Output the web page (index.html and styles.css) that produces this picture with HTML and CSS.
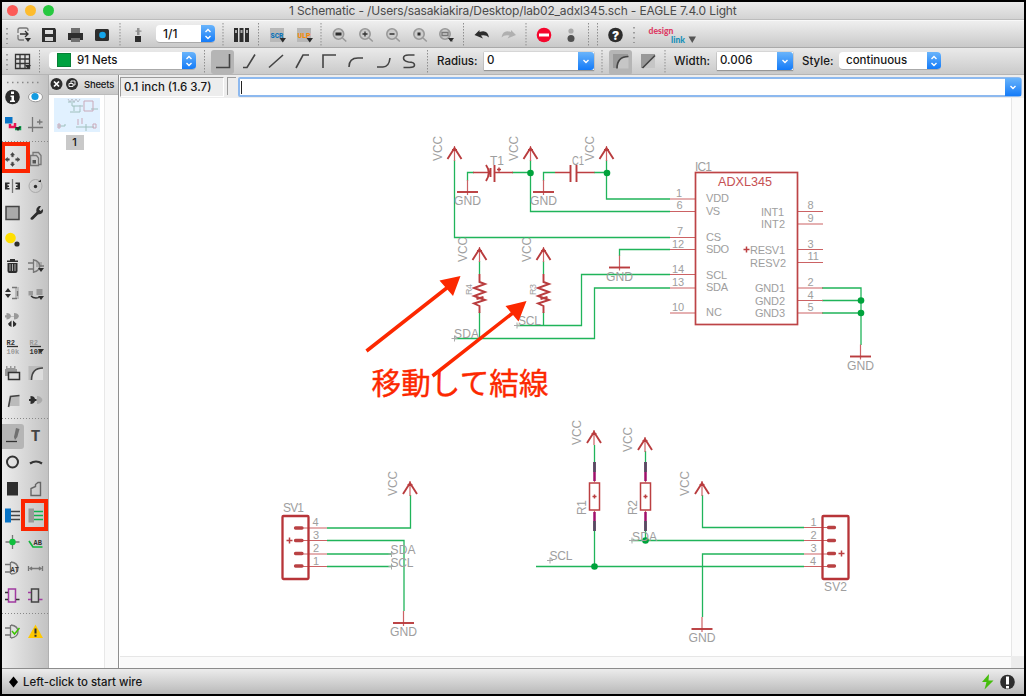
FILE: index.html
```html
<!DOCTYPE html>
<html lang="en">
<head>
<meta charset="utf-8">
<title>1 Schematic - EAGLE 7.4.0 Light</title>
<link rel="stylesheet" href="styles.css">
</head>
<body>
<div class="window">
  <header class="titlebar">
    <div class="lights"><i class="close"></i><i class="min"></i><i class="max"></i></div>
    <span class="title">1 Schematic - /Users/sasakiakira/Desktop/lab02_adxl345.sch - EAGLE 7.4.0 Light</span>
  </header>

  <div class="toolbar main-tools">
    <svg width="154" height="27" viewBox="2 20 154 27">
      <path class="grip" d="M7 27v16"/>
      <path class="ln g" d="M18 32v-3q0-2 2-2h6q2 0 2 2v1M18 34v3q0 2 2 2h4"/>
      <path class="ln" d="M20 33h8m-3-3 3 3-3 3"/><path class="k" d="M25 37h6l-3 4z"/>
      <path class="k" fill-rule="evenodd" d="M42 27h13l1 2v12H42zM45 29v4h8v-4zM45 36v4h8v-4z"/>
      <path class="gray" d="M71 27h9v5h-9z"/><path class="k" d="M68 32h15v7h-3v-2h-9v2h-3z"/><path class="gray" d="M71 37h9v4h-9z"/>
      <rect class="k" x="95" y="28" width="14" height="12" rx="1.5"/><circle cx="102.5" cy="34" r="3.300" fill="#14a5ea"/>
      <path class="sep" d="M120 22v24"/>
      <path class="gray" d="M137 27h2.500v7h-2.500zM135.500 29.500h6v1.200h-6z" opacity=".7"/><rect class="k" x="135" y="35" width="6" height="6"/>
    </svg>
    <div class="select page"><span>1/1</span><b><svg width="14" height="18" viewBox="0 0 14 18"><path d="M4.500 7 7 4.500 9.500 7M4.500 11 7 13.500 9.500 11"/></svg></b></div>
    <svg width="430" height="27" viewBox="215 20 430 27">
      <path class="sep" d="M223 22v24M258.500 22v24M321 22v24M463.500 22v24M526 22v24M588.500 22v24M597.500 22v24"/>
      <path class="k" d="M234 27h4v14h-4zM239.500 27h4v14h-4zM245 27h4v14h-4z"/><path d="M235 29h2v3h-2zM240.500 29h2v3h-2zM246 29h2v3h-2z" fill="#aaa"/>
      <rect x="270" y="27" width="14" height="14" fill="#b8b8b8"/><text class="tag" x="270.500" y="36.500" fill="#0f74b8" textLength="13" lengthAdjust="spacingAndGlyphs">SCR</text><path class="k" d="M279.500 37h6.500l-3.250 4.500z"/>
      <rect x="297" y="27" width="14" height="14" fill="#b8b8b8"/><text class="tag" x="297.500" y="36.500" fill="#f58a0a" textLength="13" lengthAdjust="spacingAndGlyphs">ULP</text><path class="k" d="M306.500 37h6.500l-3.250 4.500z"/>
      <g class="lens"><circle cx="338.500" cy="33" r="5.200"/><path d="m342.500 37 3.800 3.500"/><circle cx="365" cy="33" r="5.200"/><path d="m369 37 3.800 3.500"/><circle cx="392" cy="33" r="5.200"/><path d="m396 37 3.800 3.500"/><circle cx="419" cy="33" r="5.200"/><path d="m423 37 3.800 3.500"/><circle cx="445" cy="33" r="5.200"/><path d="m449 37 3.800 3.500"/></g>
      <path class="ln" d="M362.500 33h5M365 30.500v5M389.500 33h5"/><path class="k" d="M335.500 31.500h6v3h-6zM417.500 31.500h3v3h-3zM448 37h6l-3 4z"/><path class="ln g" d="M442 31.500h6v3h-6z"/>
      <path class="k" d="m474.500 34 5-5v2q8-3 9.500 5.500-3-3-8-2l2 3z"/><path fill="#b0b0b0" d="m516 34-5-5v2q-8-3-9.500 5.500 3-3 8-2l-2 3z"/>
      <circle cx="544" cy="34" r="7.300" fill="#f5062d"/><path d="M539 32.500h10v3h-10z" fill="#fff"/>
      <circle cx="571" cy="30" r="2.600" fill="#aaa"/><circle cx="571" cy="37.500" r="3.500" fill="#505050"/>
      <circle class="k" cx="615.500" cy="34" r="7.300"/><text class="help" x="615.500" y="38.500">?</text>
      <path class="grip" d="M634 26v16"/>
    </svg>
    <svg width="60" height="27" viewBox="645 20 60 27">
      <text class="design" x="648.500" y="33" textLength="25" lengthAdjust="spacingAndGlyphs">design</text><text class="link" x="671" y="41.500" textLength="14" lengthAdjust="spacingAndGlyphs">link</text><path d="M688.500 35.500h7.500l-3.750 6.500z" fill="#555"/>
    </svg>
  </div>

  <div class="toolbar params">
    <svg width="47" height="27" viewBox="2 48 47 27">
      <path class="grip" d="M7 54v16"/><path class="ln" d="M15.500 54.500h14v14h-14zM15.500 59h14M15.500 63.500h14M20 54.500v14M25 54.500v14"/><path class="k" d="M25 65h6l-3 4z"/><path class="sep" d="M39.500 50v23"/>
    </svg>
    <div class="select layer"><span><i class="swatch"></i>91 Nets</span><b><svg width="14" height="18" viewBox="0 0 14 18"><path d="M4.500 7 7 4.500 9.500 7M4.500 11 7 13.500 9.500 11"/></svg></b></div>
    <svg width="241" height="27" viewBox="196 48 241 27">
      <path class="sep" d="M204.500 50v23M427.500 50v23"/>
      <rect class="pressed" x="211" y="50" width="23" height="24" rx="3"/>
      <path class="bend" d="M216 67.500h13.500V54M243 67.500h4l8-13M269 67.500 283 55M296 68l7-13h6M323 68V55h13M349 67q0-9 9-9h5M377 67h6q6 0 7-9M414.500 55h-6q-5 0-5 3t5 4q6 0 6 3 0 2.500-5 2.500h-6"/>
    </svg>
    <label class="lb radius">Radius:</label>
    <div class="combo r"><span>0</span><b><svg width="16" height="18" viewBox="0 0 16 18"><path d="m5.500 8 2.500 2.500L10.500 8"/></svg></b></div>
    <svg width="80" height="27" viewBox="594 48 80 27">
      <path class="sep" d="M602 50v23M665 50v23"/><rect class="pressed" x="609" y="50" width="23" height="25" rx="3"/>
      <path d="M613 54h15v14h-15zM641 54h14v14h-14z" fill="#999"/><path d="M628.500 56.500q-10 0-11 12h11zM655 55v13h-12z" fill="#c6c6c6"/><path class="bend" d="M617 68.500q0-12 11.500-12M642.500 68 655 55.500"/>
    </svg>
    <label class="lb width">Width:</label>
    <div class="combo w"><span>0.006</span><b><svg width="16" height="18" viewBox="0 0 16 18"><path d="m5.500 8 2.500 2.500L10.500 8"/></svg></b></div>
    <label class="lb style">Style:</label>
    <div class="select st"><span>continuous</span><b><svg width="14" height="18" viewBox="0 0 14 18"><path d="M4.500 7 7 4.500 9.500 7M4.500 11 7 13.500 9.500 11"/></svg></b></div>
  </div>

  <main class="work">
    <aside class="palette">
      <svg width="46" height="63" viewBox="2 75 46 63">
        <path class="grip" d="M7 82.500h34"/>
        <circle class="k" cx="12.500" cy="97" r="7.300"/><path d="M11 91.500h3v2.500h-3zM10.500 95.500h3.500v5h1v1.500h-5v-1.500h1.500V97h-1z" fill="#fff"/>
        <ellipse cx="35.500" cy="97" rx="7" ry="4.800" fill="#fff" stroke="#999"/><circle cx="35" cy="96.500" r="3.600" fill="#139be0"/>
        <path fill="#0874c7" d="M5 117h7.500v6.500H5z"/><path d="M10 124v3h5v-4" fill="none" stroke="#e91455" stroke-width="2.500"/><path d="M15 129h5v-3" fill="none" stroke="#0aa34b" stroke-width="2.500"/><path class="k" d="M15 127h6l-3 4z"/>
        <path class="ln g" d="M32.500 117v15M28 127.500h15M37 122h5.500M39.700 119.500v5"/>
      </svg>
      <div class="rule"></div>
      <svg width="46" height="270" viewBox="2 145 46 270">
        <path d="m12.500 152.500 2 2.500h-1.200v1.800h-1.600V155h-1.200zM12.500 166.500l2-2.500h-1.200v-1.800h-1.600v1.800h-1.200zM5 159.500l2.500-2v1.200h1.800v1.600H7.500v1.200zM20 159.500l-2.500-2v1.200h-1.800v1.600h1.800v1.200z" fill="#444" stroke="#444" stroke-width=".5"/>
        <g class="ln g"><path d="M33 155v-2.500h5.500l2.500 3v9h-2"/><path fill="#ccc" d="M30.500 155.500h6l2 2.500v7.500h-8z"/></g><path fill="#555" d="M32.500 160h3.500v3.500h-3.500z"/>
        <path class="k" d="M5 182.500h4.500v1.500H7.500v1.500h1.500v1.500H7.500v1h2v1.500H5zM15.500 182.500h4.500v7h-4.500V188h2v-1H16v-1.500h1.500V184h-2z"/><path class="ln g" d="M12.500 179v14"/>
        <circle cx="35.500" cy="186" r="6.500" fill="none" stroke="#aaa"/><circle class="k" cx="35.500" cy="186.500" r="1.700"/><path class="k" d="M38 182h3v-2.500z"/>
        <path d="M6 206.500h13v13H6z" fill="#aaa" stroke="#444" stroke-width="1.500"/>
        <path d="m30.500 218 6-6q-1-4 2.500-6h2l-2 3.500 1.500 1.500 2.500-2q1 5-5 5.500l-5 5q-3 1-2.500-1.500z" class="k"/>
        <circle cx="10.500" cy="238" r="5.300" fill="#ffdf00"/><circle class="k" cx="17" cy="244" r="2.600"/>
        <path class="k" d="M7 260.500h11v1.500H7zM10 259h5v1.500h-5zM7.500 263h10v8q0 2-2 2h-6q-2 0-2-2z"/><path d="M10 264v7M12.500 264v7M15 264v7" stroke="#aaa"/>
        <path d="M36 262h6v5h-6z" fill="#aaa"/><path class="ln g" d="M33.500 259v14M28 263h5M28 269h5M34 260q5 1 6 6-1 5-6 6M40 266h4"/><path class="k" d="M38 268h6l-3 4z"/>
        <path class="k" d="m5 292 3-4 3 4zM5 294l3 4 3-4z"/><path d="M15 287h4v12h-4z" fill="#bbb"/><path class="ln g" d="M12 287.500h5M17.500 291v5M12 298.500h5"/>
        <path d="M28.500 291h4.500v4.500h-4.500zM36.500 289h6v6h-6z" fill="#999"/><path class="ln" d="M31 296q3 3 8 1.500"/><path class="k" d="M38 296h6l-3 4z"/>
        <path d="M5 315.300h1.500v-2.300q4 0 4.500 3h3v-3q4 0 5 3-1 3.500-5 3.500v-3h-3q-1 3-4.500 3v-2H5z" fill="#999"/><path class="k" d="M11.500 320.500v6.500q-3-1-3.500-3.200zM13 320.500v6.500q3-1 3.500-3.200z"/>
        <text class="val" x="6.500" y="344.500">R2</text><path class="ln" d="M7 346.500h11"/><text class="val dim" x="6.500" y="354">10k</text>
        <text class="val dim" x="29.500" y="344.500">R2</text><path class="ln" d="M30 346.500h11"/><text class="val" x="29.500" y="354">10k</text><path class="k" d="M38 349h6l-3 4z"/>
        <path d="M5 369h1v-3h1.500v2H10v-2h1.500v2H14v-2h1.500v3H17v7H5z" fill="#999"/><path d="M8.500 372.500h11v7h-11z" fill="#ddd" stroke="#333" stroke-width="1.500"/>
        <path d="M28.500 366h14v14h-14z" fill="#bbb"/><path d="M43 368q-10 0-11.500 12H43z" fill="#ddd"/><path class="bend" d="M31.500 380q0-12 11.500-12"/>
        <path d="M8.500 406 10.500 396l9-.5V406z" fill="#bbb"/><path class="bend" d="M8.500 407 10.500 396.500l9-1"/>
        <path class="k" d="M29 399h1.500v-3q4 0 4.500 3h1.500v2H35q-1 3-4.500 3v-3H29z"/><path d="M37 396q4 0 5.500 4-1.500 4-5.500 4z" fill="#aaa"/>
      </svg>
      <div class="rule low"></div>
      <svg width="46" height="189" viewBox="2 421 46 189">
        <rect class="pressed" x="0" y="424" width="24" height="25" rx="3"/><path class="ln" d="M6 441.500h11"/><path class="gray" d="m16 428 3.500 1-2.200 8-2.300 3-1-3z"/>
        <text class="tee" x="35.500" y="441">T</text>
        <circle cx="12.500" cy="462" r="5.500" fill="none" stroke="#333" stroke-width="2"/><path d="M30 463.500q6-4 12 0" fill="none" stroke="#333" stroke-width="2.200"/>
        <path class="k" d="M7 482h11v13.500H7z"/><path d="M31 495.500v-7l4.500-2v-2l2.500-2h2.500v13z" fill="none" stroke="#666" stroke-width="1.400"/>
        <path fill="#0874c7" d="M5 508.500h6v14H5z"/><path class="bend" d="M11 511.500h9M11 515.500h9M11 519.500h9"/>
        <path fill="#999" d="M28.500 508.500h5.500v14h-5.500z"/><path d="M34 511.500h9M34 515.500h9M34 519.500h9" stroke="#11b14d" stroke-width="1.500"/>
        <path class="ln g" d="M5.500 542h14M12.500 535v14"/><circle cx="12.500" cy="542" r="3.200" fill="#10bf3d"/>
        <path d="m29 541 4 6h9.500" fill="none" stroke="#12b63c" stroke-width="1.700"/><text class="ab" x="33.500" y="545">AB</text>
        <path class="ln g" d="M5 564.500h5M5 572h5M10.500 562v12M11 562q7 1 7 6.500T11 574"/><text class="ab" x="10.500" y="571.500">AT</text>
        <path class="ln g" d="M28.500 566v5M42.500 566v5M29.500 568.500h12M32 567l-2 1.500 2 1.500M39 567l2 1.500-2 1.500"/>
        <path d="M8.500 589h7v13h-7z" fill="none" stroke="#a03aa0" stroke-width="1.500"/><path class="ln" d="M5 592.500h3M5 599.500h3M16 599.500h3.500"/>
        <path d="M31.500 589h7v13h-7z" fill="none" stroke="#444" stroke-width="1.500"/><path d="M28 592.500h3M28 599.500h3M39 599.500h3.500" stroke="#a03aa0" stroke-width="1.500"/>
      </svg>
      <div class="rule low"></div>
      <svg width="46" height="52" viewBox="2 616 46 52">
        <path class="ln g" d="M5 628h5M5 635h5M10.500 625v13M11 625q7 1 7 6.500T11 638"/><path d="m12 631 2.500 3 5-6" fill="none" stroke="#3cc500" stroke-width="1.500"/>
        <path d="M35.500 624.500 43 638H28z" fill="#ffc900"/><path class="k" d="M34.500 628.500h2v5h-2zM34.500 634.800h2v2h-2z"/>
      </svg>
      <div class="mark move"></div><div class="mark wires"></div>
    </aside>

    <section class="sheets">
      <div class="sheets-head">
        <svg width="35" height="20" viewBox="48 75 35 20"><circle class="k" cx="55.500" cy="84" r="6"/><path d="m53 81.500 5 5m0-5-5 5" stroke="#fff" stroke-width="1.700"/><circle class="k" cx="71" cy="84" r="6"/><path d="M70 83v-2h4v4h-2M68 83.500h4v3h-4z" fill="none" stroke="#eee"/></svg>
        <span>Sheets</span>
      </div>
      <div class="sheets-body">
        <div class="sheet-list">
          <svg class="thumb" width="46" height="34" viewBox="53 98 46 34">
            <g fill="none" stroke-width="1"><path stroke="#9fc0bd" d="M67 102h7M71 103v3h11M69 112h10v-3M90 109h7M57 126h7v-2M75 127h18M85 124v7M73 106v5"/><path stroke="#c9a9b9" d="M83 101h9v10h-9zM57 124h2v4h-2zM92 124h3v4h-3zM77 119v6M81 118v6"/><path stroke="#b8c0cc" d="m67 99 2 3 2-3 2 3 2-3 2 3 2-3M79 105v4"/></g>
          </svg>
          <span class="num">1</span>
        </div>
        <div class="vtrack"></div>
      </div>
    </section>

    <section class="editor">
      <div class="command">
        <span class="coords">0.1 inch (1.6 3.7)</span><span class="stub"></span>
        <div class="cmd"><i class="caret"></i><b><svg width="16" height="18" viewBox="0 0 16 18"><path d="m5.500 8 2.500 2.500L10.500 8"/></svg></b></div>
      </div>
      <div class="viewport">
        <svg class="canvas" width="891" height="558" viewBox="120 98 891 558">
          <defs>
            <g id="vcc"><path class="thin" d="M0-1v15"/><path class="sym" d="M-7 12 0 1l7 11M-2.500 3h5"/><text class="net" transform="translate(-13 14) rotate(-90)" textLength="25" lengthAdjust="spacingAndGlyphs">VCC</text></g>
            <g id="gnd"><path class="thin" d="M0-12V3"/><path class="sym" d="M-10.500 0h21"/><text class="net" x="-13.500" y="13" textLength="27" lengthAdjust="spacingAndGlyphs">GND</text></g>
            <path id="res" class="sym" d="M0 0v8l5.500 2-11 4 11 4-11 4 11 4-11 3.500 5.500 2.500v7M-3 25l7-2"/>
            <g id="box"><path class="sym2" d="M-5 21H5v27H-5zM-2 34.500h4M0 32.500v4"/><path class="thin" d="M0 18v3M0 48v3"/><path d="M0 0v19M0 50v19" stroke="#a0106c" stroke-width="2.500"/><path d="M0 0v10M0 59v10" stroke="#505060" stroke-width="2.500"/></g>
            <path id="plus" d="M-3 0h6M0-3v6"/>
          </defs>
          <g class="wire">
            <path d="M454.500 160v77.500H670M467.500 181v-8.500H474M512 172.500h18.500M530.500 160v51.500H670M543.500 181v-8.500H555M594 172.500h13M606.500 160v39H670M619.500 256v-6.500H670M479.500 261v13M479.500 312v26.500M543.500 261v13M543.500 312v13.500M517 325.500h64.500v-51H670M454 338.500h140.500v-50.500H670M822 288h39v57M822 300.500h39M822 313h39"/>
            <path d="M327 528h83.500v-33M327 540.500h77V611M327 554h65M327 566.500h65M594.500 445v17M594.500 530v36M645.500 451v11M645.500 530v10M536 566.500h268M631 540.500h173M702.500 495v32.500H804M702.500 617v-63H804"/>
          </g>
          <g class="dots"><circle cx="530.500" cy="173" r="3.300"/><circle cx="607" cy="173" r="3.300"/><circle cx="861" cy="300.500" r="3.300"/><circle cx="861" cy="313" r="3.300"/><circle cx="594.500" cy="566.500" r="3.300"/><circle cx="645.500" cy="540.500" r="3.300"/></g>
          <use href="#vcc" x="454.500" y="147"/><use href="#vcc" x="530.500" y="147"/><use href="#vcc" x="606.500" y="147"/><use href="#vcc" x="479.500" y="248"/><use href="#vcc" x="543.500" y="248"/><use href="#vcc" x="410" y="482"/><use href="#vcc" x="594" y="431"/><use href="#vcc" x="645" y="438"/><use href="#vcc" x="702" y="482"/>
          <use href="#gnd" x="467.500" y="192"/><use href="#gnd" x="543.500" y="192"/><use href="#gnd" x="619.500" y="267.500"/><use href="#gnd" x="860.500" y="356.500"/><use href="#gnd" x="403.500" y="623"/><use href="#gnd" x="702" y="629"/>
          <use href="#res" x="479.500" y="274"/><use href="#res" x="543.500" y="274"/><use href="#box" x="594.500" y="462"/><use href="#box" x="645.500" y="462"/>
          <path class="sym2" d="M473 172.500h17M494 172.500h19M555 172.500h15M576 172.500h18.500M497 169.500h4M499 167.500v4"/>
          <path class="sym" d="M494.500 165v17M486 165q5.500 7.500 0 16M490.500 168v9M570.500 165v17M576.500 165v17"/>
          <path class="pins" d="M670 199h25M670 211.500h25M670 237.500h25M670 249.500h25M670 274.500h25M670 288h25M670 313h25M797 211.500h26M797 224h26M797 249.500h26M797 262.500h26M797 288h26M797 300.500h26M797 313h26M300 528h27M300 540.500h27M300 554h27M300 566.500h27M804 527.500h26M804 540.500h26M804 554h26M804 566.500h26"/>
          <rect class="chip" x="695.500" y="172.500" width="102" height="152"/>
          <rect class="conn" x="282.500" y="516" width="26" height="63" rx="1"/><rect class="conn" x="822.500" y="516" width="26" height="63" rx="1"/>
          <path class="pads" d="M295.500 528h6.500M295.500 540.500h6.500M295.500 553.500h6.500M295.500 566h6.500M828.500 527.500h6M828.500 540.500h6M828.500 553.500h6M828.500 566h6"/>
          <g class="sym2"><use href="#plus" x="289.500" y="540.500"/><use href="#plus" x="841.500" y="553.500"/><use href="#plus" x="746.500" y="249.500"/></g>
          <g class="cross"><use href="#plus" x="517" y="325.500"/><use href="#plus" x="454.500" y="338.500"/><use href="#plus" x="391.500" y="554"/><use href="#plus" x="391.500" y="566.500"/><use href="#plus" x="550" y="560.500"/><use href="#plus" x="632" y="540.500"/></g>
          <text class="chipname" x="718" y="186" textLength="54" lengthAdjust="spacingAndGlyphs">ADXL345</text>
          <g class="net">
            <text x="695" y="170.500" textLength="17">IC1</text><text x="490" y="165">T1</text><text x="572" y="165" textLength="12" lengthAdjust="spacingAndGlyphs">C1</text>
            <g class="pin"><text x="706" y="202" textLength="23">VDD</text><text x="706" y="215" textLength="14">VS</text><text x="706" y="240.500" textLength="15">CS</text><text x="706" y="253" textLength="23">SDO</text><text x="706" y="279" textLength="21">SCL</text><text x="706" y="291" textLength="22">SDA</text><text x="706" y="316" textLength="16">NC</text>
            <text x="761" y="215.500" textLength="23">INT1</text><text x="761" y="228" textLength="24">INT2</text><text x="750" y="254" textLength="35">RESV1</text><text x="750" y="266.500" textLength="36">RESV2</text><text x="755" y="291.500" textLength="30">GND1</text><text x="755" y="304.500" textLength="30">GND2</text><text x="755" y="317" textLength="30">GND3</text>
            <text x="676" y="197">1</text><text x="676.500" y="209">6</text><text x="677" y="235">7</text><text x="672" y="248" textLength="12">12</text><text x="672" y="272.500" textLength="12">14</text><text x="672" y="286" textLength="12">13</text><text x="672" y="311" textLength="12">10</text>
            <text x="807.500" y="209">8</text><text x="807.500" y="222">9</text><text x="807.500" y="248">3</text><text x="807.500" y="260">11</text><text x="807.500" y="286">2</text><text x="807.500" y="298.500">4</text><text x="807.500" y="311">5</text>
            <text x="312.500" y="526">4</text><text x="313" y="539">3</text><text x="313" y="552">2</text><text x="313" y="564.500">1</text>
            <text x="810.500" y="526">1</text><text x="810.500" y="539">2</text><text x="810.500" y="552">3</text><text x="810" y="564.500">4</text></g>
            <text x="518" y="324.500" textLength="23">SCL</text><text x="454" y="338" textLength="25">SDA</text>
            <text x="283" y="511.500" textLength="21">SV1</text><text x="824" y="591" textLength="23">SV2</text>
            <text x="390.500" y="553.500" textLength="25">SDA</text><text x="390.500" y="566.500" textLength="23">SCL</text><text x="549.500" y="560" textLength="23">SCL</text><text x="632" y="540.500" textLength="25">SDA</text>
            <text transform="translate(586 515) rotate(-90)" textLength="15">R1</text><text transform="translate(637 515) rotate(-90)" textLength="15">R2</text>
            <text class="small" transform="translate(471.500 295) rotate(-90)" textLength="11">R4</text><text class="small" transform="translate(535.500 295) rotate(-90)" textLength="11">R3</text>
          </g>
          <g class="note"><path class="shaft" d="M366.500 351 448 287M432.500 376 514 312"/><path d="M460.500 276 439.500 280.500 453 296zM526.500 301 505.500 306l13 15.500z"/><text x="371.500" y="394" textLength="177">移動して結線</text></g>
        </svg>
        <div class="vscroll"></div>
        <div class="hscroll"></div>
        <div class="corner"></div>
      </div>
    </section>
  </main>

  <footer class="status">
    <svg width="21" height="25" viewBox="2 669 21 25"><path d="m13.500 676.500 4.500 5.500-4.500 5.500-4.500-5.500z"/></svg>
    <span>Left-click to start wire</span>
    <svg class="state" width="50" height="25" viewBox="974 669 50 25"><path d="m989 674-7 8h4.500l-2 7.500 9-9h-5z" fill="#45bd0c"/><circle class="k" cx="1007.500" cy="682" r="7.300"/><path d="M1006 676.500h3v8h-3zM1006 686h3v2.500h-3z" fill="#fff"/></svg>
  </footer>
</div>
</body>
</html>
```
FILE: styles.css
```css
* { box-sizing: border-box; }
body { margin: 0; background: #000; font-family: Inter, Roboto, sans-serif; color: #161616; }
.window { width: 1026px; height: 696px; border: 2px solid #000; display: flex; flex-direction: column; overflow: hidden; background: #fff; }
svg { display: block; flex: none; }

.titlebar { height: 18px; flex: none; background: linear-gradient(#ebebeb, #d3d3d3); border-bottom: 1px solid #bcbcbc; display: flex; align-items: center; }
.lights { display: flex; gap: 7px; padding-left: 5px; width: 287px; }
.lights i { width: 11px; height: 11px; border-radius: 50%; }
.close { background: #fc5b57; }
.min { background: #fdbc2e; }
.max { background: #27c840; }
.title { font-size: 12px; color: #4a4a4a; white-space: nowrap; line-height: 16px; letter-spacing: -0.150px; }

.toolbar { flex: none; display: flex; align-items: flex-start; background: linear-gradient(#efefef, #c9c9c9); }
.main-tools { height: 28px; border-top: 1px solid #f8f8f8; border-bottom: 1px solid #aaa; }
.params { height: 27px; background: linear-gradient(#eaeaea, #cacaca); border-bottom: 1px solid #b5b5b5; }
.grip { stroke: #888; stroke-width: 1.500; stroke-dasharray: 1.500 3.500; fill: none; }
.sep { stroke: #8f8f8f; stroke-width: 1; stroke-dasharray: 1.500 1.500; fill: none; }
.k { fill: #2d2d2d; }
.gray { fill: #707070; }
.ln { stroke: #333; stroke-width: 1.300; fill: none; }
.ln.g, g.g { stroke: #777; }
.bend { stroke: #444; stroke-width: 1.600; fill: none; }
.pressed { fill: #b5b5b5; }
.lens { fill: #ccc; stroke: #999; stroke-width: 1.600; }
.tag { font: 900 8px Roboto, sans-serif; }
.help { font: 900 12px Inter, sans-serif; fill: #fff; text-anchor: middle; }
.design { font: 900 10px Lato, sans-serif; fill: #dc3d66; }
.link { font: 900 9px Lato, sans-serif; fill: #1690b8; }

.select, .combo { display: flex; height: 18px; background: #fff; font-size: 11.500px; line-height: 17px; font-weight: 500; flex: none; box-shadow: 0 0 1px #888, 0 1px 1px #999; }
.select { border-radius: 4px; overflow: hidden; box-shadow: none; border-bottom: 1px solid #aaa; }
.select span, .combo span { flex: 1; white-space: nowrap; }
.select b, .combo b, .cmd b { background: linear-gradient(#69b4fb, #147bf8); flex: none; }
.combo b { border-radius: 0 3px 3px 0; }
b path { fill: none; stroke: #fff; stroke-width: 1.400; }
.page { width: 59px; margin-top: 4px; }
.page span { padding-left: 7px; font-size: 12px; }
.layer { width: 147px; margin-top: 4px; }
.layer span { display: flex; padding-left: 8px; gap: 6px; }
.swatch { width: 14px; height: 14px; margin-top: 1px; background: #00a240; border: 1px solid #087f36; }
.lb { font-size: 11.500px; font-weight: 500; line-height: 27px; white-space: nowrap; flex: none; }
.radius { width: 47px; }
.combo { margin-top: 4px; }
.combo span { padding-left: 3px; }
.combo.r { width: 110px; }
.width { width: 43px; }
.combo.w { width: 76px; }
.style { width: 46px; padding-left: 9px; }
.st { width: 102px; margin-top: 4px; }
.st span { padding-left: 7px; }

.work { flex: 1; min-height: 0; display: flex; }
.palette { width: 46px; flex: none; position: relative; background: linear-gradient(90deg, #ececec, #c3c3c3); }
.rule { height: 7px; background: repeating-linear-gradient(90deg, #888 0 1.500px, transparent 1.500px 3px) 0 3px / 100% 1px no-repeat; }
.rule.low { height: 6px; }
.tee { font: 700 16px "Liberation Mono", monospace; fill: #444; text-anchor: middle; }
.val { font: 700 7px "Liberation Mono", monospace; fill: #333; }
.val.dim { fill: #999; }
.ab { font: 700 7px "Liberation Mono", monospace; fill: #333; }
.mark { position: absolute; border: 4px solid #fc2500; }
.move { left: -1px; top: 67px; width: 29px; height: 31px; }
.wires { left: 19px; top: 424px; width: 27px; height: 32px; }

.sheets { width: 71px; flex: none; display: flex; flex-direction: column; border-left: 1px solid #b0b0b0; border-right: 1px solid #8f8f8f; }
.sheets-head { height: 20px; display: flex; align-items: center; background: linear-gradient(#e8e8e8, #c8c8c8); font-size: 9.500px; letter-spacing: -0.200px; font-weight: 500; border-bottom: 1px solid #bbb; }
.sheets-body { flex: 1; display: flex; }
.sheet-list { flex: 1; display: flex; flex-direction: column; align-items: center; padding-top: 3px; gap: 3px; }
.thumb { background: #e1f1ff; }
.num { width: 18px; height: 15px; margin-right: 4px; background: #c9c9c9; font-size: 11px; font-weight: 500; line-height: 15px; text-align: center; }
.vtrack { width: 14px; background: #fafafa; border-left: 1px solid #e8e8e8; }

.editor { flex: 1; min-width: 0; display: flex; flex-direction: column; padding-left: 1px; }
.command { height: 23px; flex: none; display: flex; background: #ededed; gap: 3px; }
.coords { width: 104px; height: 20px; margin-top: 2px; border: 1px solid #9b9b9b; border-color: #9b9b9b #fff #fff #9b9b9b; padding-left: 3px; font-size: 11.500px; font-weight: 500; line-height: 19px; white-space: nowrap; }
.stub { width: 9px; height: 18px; margin-top: 2px; border-left: 1px solid #9b9b9b; border-top: 1px solid #9b9b9b; }
.cmd { flex: 1; height: 20px; margin: 2px 2px 0 -1px; border: 2px solid #8db9ef; border-radius: 2px 4px 4px 2px; background: #fff; display: flex; justify-content: space-between; }
.cmd b { margin: -1px -1px 0 0; height: 18px; }
.caret { width: 1px; height: 13px; margin: 2px 0 0 1px; background: #222; }
.viewport { flex: 1; display: grid; grid-template: 558px 1fr / 891px 1fr; }
.vscroll { background: #fafafa; border-left: 1px solid #e6e6e6; }
.hscroll { background: #fafafa; border-top: 1px solid #e6e6e6; }
.corner { background: #ececec; }

.canvas { background: #fff; }
.wire { stroke: #20b45a; stroke-width: 1.300; fill: none; }
.dots { fill: #00a33c; }
.sym { fill: none; stroke: #b93c3e; stroke-width: 1.900; }
.sym2 { fill: none; stroke: #bb3f41; stroke-width: 1.500; }
.thin, .pins { fill: none; stroke: #cb6264; stroke-width: 1.200; }
.chip { fill: none; stroke: #bd4446; stroke-width: 1.700; }
.conn { fill: none; stroke: #b73438; stroke-width: 2.300; }
.pads { stroke: #b94143; stroke-width: 3.300; stroke-linecap: round; }
.cross { stroke: #aaa; stroke-width: 1; }
.canvas .net { font: 12px "Liberation Sans", sans-serif; fill: #9e9e9e; }
.canvas .pin { font-size: 11px; }
.canvas .net .small { font-size: 9px; }
.chipname { font: 12.500px "Liberation Sans", sans-serif; fill: #c65153; }
.note { fill: #fc2800; }
.note .shaft { stroke: #fc2800; stroke-width: 3.500; }
.note text { font: 400 29.500px "Noto Sans CJK JP", sans-serif; stroke: #fc2800; stroke-width: 0.400; }

.status { height: 26px; flex: none; display: flex; align-items: center; border-top: 1px solid #8c8c8c; background: linear-gradient(#ececec, #b9b9b9); font-size: 11.400px; font-weight: 500; }
.state { margin-left: auto; }
```
